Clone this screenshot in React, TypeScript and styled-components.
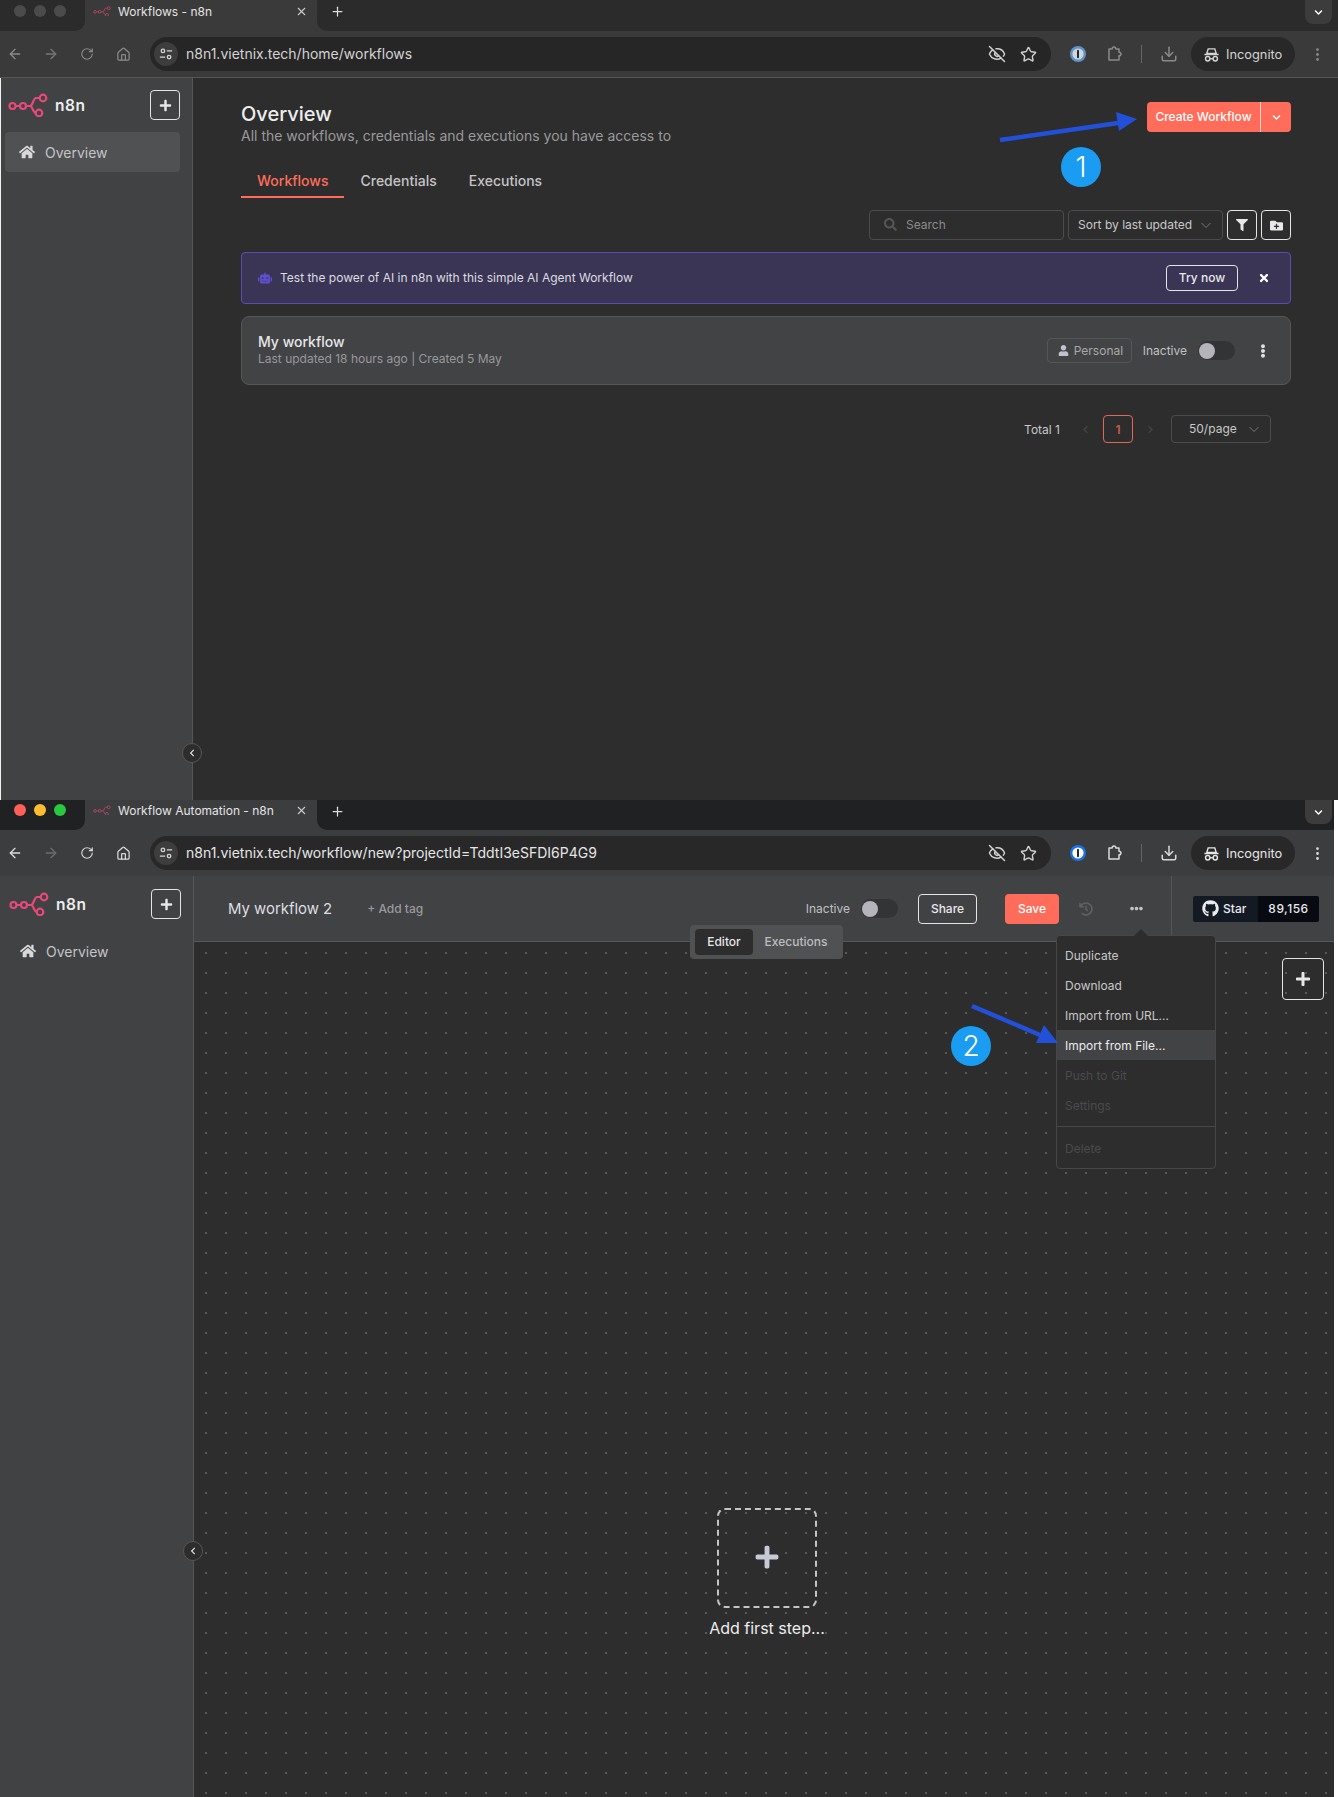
import { FC, ReactNode } from 'react';
import styled, { createGlobalStyle } from 'styled-components';
import { ArrowLeft, ArrowRight, Download, EllipsisVertical, EyeOff, House, Plus, RotateCw, Star, X } from 'lucide-react';
import {
  FaChevronDown,
  FaChevronLeft,
  FaChevronRight,
  FaEllipsisH,
  FaEllipsisV,
  FaFilter,
  FaFolderPlus,
  FaGithub,
  FaHistory,
  FaHome,
  FaPlus,
  FaRobot,
  FaSearch,
  FaTimes,
  FaUser,
} from 'react-icons/fa';

const GlobalStyle = createGlobalStyle`
  html, body {
    margin: 0;
    padding: 0;
    background: #ffffff;
  }
  body {
    font-family: Inter, "Liberation Sans", sans-serif;
    -webkit-font-smoothing: antialiased;
  }
  * {
    box-sizing: border-box;
  }
`;

const Page = styled.div`
  width: 1338px;
  height: 1797px;
  overflow: hidden;
`;

const Window = styled.section<{ $focused?: boolean }>`
  --strip: ${(p) => (p.$focused ? '#202122' : '#2b2b2b')};
  --strip-height: ${(p) => (p.$focused ? '30px' : '31px')};
  --tab-lift: ${(p) => (p.$focused ? '10px' : '9px')};
  --chrome: ${(p) => (p.$focused ? '#3c3d3f' : '#3a3a3a')};
  --pill: ${(p) => (p.$focused ? '#282829' : '#262626')};
  --ink: ${(p) => (p.$focused ? '#d8d9db' : '#8a8a8a')};
  --ink-soft: ${(p) => (p.$focused ? '#6c6d70' : '#777777')};
  --url: ${(p) => (p.$focused ? '#e6e6e6' : '#d4d4d4')};
  position: relative;
  display: flex;
  flex-direction: column;
  width: ${(p) => (p.$focused ? '1334px' : '1338px')};
  height: ${(p) => (p.$focused ? '997px' : '800px')};
  background: #2d2d2d;
`;

const TabStrip = styled.div`
  display: flex;
  flex: none;
  height: var(--strip-height);
  background: var(--chrome);
`;

const LightsArea = styled.div`
  display: flex;
  align-items: center;
  gap: 8px;
  width: 85px;
  padding: 0 0 var(--tab-lift) 14px;
  background: var(--strip);
  border-bottom-right-radius: 10px;
`;

const Light = styled.span<{ $color: string }>`
  width: 12px;
  height: 12px;
  border-radius: 50%;
  background: ${(p) => p.$color};
`;

const Tab = styled.div`
  display: flex;
  align-items: center;
  width: 232px;
  padding: 0 9px var(--tab-lift) 8px;
  font-size: 12px;
  color: #e4e4e4;
`;

const TabTitle = styled.span`
  flex: 1;
  margin-left: 7px;
  white-space: nowrap;
`;

const StripRest = styled.div<{ $inset: number }>`
  flex: 1;
  display: flex;
  align-items: flex-start;
  padding-right: ${(p) => p.$inset}px;
  background: var(--strip);
  border-bottom-left-radius: 10px;
  color: #dcdcdc;
`;

const NewTab = styled.span`
  display: flex;
  margin: 4px 0 0 13px;
`;

const TabListButton = styled.span`
  display: flex;
  align-items: center;
  justify-content: center;
  width: 27px;
  height: 24px;
  margin-left: auto;
  border-radius: 0 0 8px 8px;
  background: #3c3c3c;
  color: #ffffff;
`;

const Toolbar = styled.div<{ $rule?: boolean }>`
  display: flex;
  flex: none;
  align-items: center;
  height: ${(p) => (p.$rule ? '47px' : '46px')};
  background: var(--chrome);
  border-bottom: ${(p) => (p.$rule ? '1px solid #555555' : 'none')};
  color: var(--ink);
`;

const NavGroup = styled.div`
  display: flex;
  gap: 6px;
`;

const NavButton = styled.span<{ $off?: boolean }>`
  display: flex;
  align-items: center;
  justify-content: center;
  width: 30px;
  color: ${(p) => (p.$off ? 'var(--ink-soft)' : 'var(--ink)')};
`;

const UrlPill = styled.div`
  display: flex;
  align-items: center;
  width: 901px;
  height: 34px;
  margin-left: 12px;
  padding: 0 14px 0 4px;
  border-radius: 17px;
  background: var(--pill);
`;

const TuneBadge = styled.span`
  display: flex;
  align-items: center;
  justify-content: center;
  width: 24px;
  height: 24px;
  border-radius: 50%;
  background: #3d3d3d;
  color: #d6d6d6;
`;

const UrlText = styled.span`
  flex: 1;
  margin-left: 8px;
  padding-bottom: 1px;
  font-size: 14px;
  color: var(--url);
  white-space: nowrap;
`;

const UrlAction = styled.span`
  display: flex;
  margin-left: 14px;
  color: #d0d0d0;
`;

const ToolSlot = styled.span<{ $gap: number }>`
  display: flex;
  align-items: center;
  justify-content: center;
  width: 28px;
  margin-left: ${(p) => p.$gap}px;
`;

const ToolRule = styled.span`
  width: 1px;
  height: 18px;
  margin-left: 13px;
  background: #666666;
`;

const IncognitoPill = styled.div`
  display: flex;
  align-items: center;
  gap: 6px;
  width: 104px;
  height: 34px;
  margin-left: 8px;
  padding-left: 12px;
  border-radius: 17px;
  background: #282829;
  font-size: 12.8px;
  color: var(--url);
`;

const Body = styled.div`
  flex: 1;
  display: flex;
  min-height: 0;
`;

const Sidebar = styled.aside<{ $framed?: boolean }>`
  position: relative;
  flex: none;
  width: ${(p) => (p.$framed ? '193px' : '194px')};
  padding: ${(p) => (p.$framed ? '12px' : '13px')} 12px 0 ${(p) => (p.$framed ? '7px' : '9px')};
  background: #414244;
  border-left: ${(p) => (p.$framed ? '1px solid #f0f0f0' : 'none')};
  border-right: 1px solid #555658;
`;

const BrandRow = styled.div`
  display: flex;
  align-items: center;
  height: 30px;
`;

const BrandName = styled.span`
  flex: 1;
  margin-left: 7px;
  font-size: 15.5px;
  font-weight: 600;
  letter-spacing: 0.6px;
  color: #ededed;
`;

const OutlineButton = styled.button<{ $size: number }>`
  display: flex;
  align-items: center;
  justify-content: center;
  flex: none;
  width: ${(p) => p.$size}px;
  height: ${(p) => p.$size}px;
  padding: 0;
  border: 1px solid #e4e4e4;
  border-radius: 4px;
  background: transparent;
  color: #e8e8ea;
`;

const NavItem = styled.div<{ $active?: boolean }>`
  display: flex;
  align-items: center;
  gap: 10px;
  height: 40px;
  margin: 12px 0 0 -3px;
  padding-left: 14px;
  border-radius: 4px;
  background: ${(p) => (p.$active ? '#505153' : 'transparent')};
  font-size: 14px;
  color: #c4c4c6;
`;

const CollapseButton = styled.span`
  position: absolute;
  top: 665px;
  right: -10px;
  z-index: 2;
  display: flex;
  align-items: center;
  justify-content: center;
  width: 20px;
  height: 20px;
  border: 1px solid #555658;
  border-radius: 50%;
  background: #2d2d2d;
  color: #e0e0e0;
`;

const OverviewMain = styled.main`
  flex: 1;
  padding: 24px 47px 0 48px;
`;

const OverviewHeader = styled.header`
  display: flex;
  justify-content: space-between;
  align-items: flex-start;
`;

const PageTitle = styled.h1`
  margin: 0;
  font-size: 20px;
  line-height: 25px;
  font-weight: 500;
  color: #eeeeee;
`;

const PageSubtitle = styled.p`
  margin: 0;
  font-size: 14px;
  line-height: 18px;
  color: #9a9a9c;
`;

const SplitButton = styled.div`
  display: flex;
  flex: none;
  width: 144px;
  height: 30px;
  border-radius: 4px;
  background: #ff6d5a;
  font-size: 12px;
  font-weight: 500;
  color: #ffffff;
`;

const SplitLabel = styled.span`
  display: flex;
  align-items: center;
  justify-content: center;
  width: 114px;
  padding-bottom: 1px;
  border-right: 1px solid #ffd5ce;
`;

const SplitCaret = styled.span`
  flex: 1;
  display: flex;
  align-items: center;
  justify-content: center;
`;

const TabsRow = styled.nav`
  display: flex;
  margin-top: 21px;
`;

const PageTab = styled.span<{ $active?: boolean }>`
  height: 32px;
  padding: 5px 16px 0;
  border-bottom: 2px solid ${(p) => (p.$active ? '#ff6d5a' : 'transparent')};
  font-size: 14px;
  line-height: 20px;
  font-weight: 500;
  color: ${(p) => (p.$active ? '#ff6d5a' : '#c4c4c6')};
`;

const FilterRow = styled.div`
  display: flex;
  justify-content: flex-end;
  gap: 4px;
  margin-top: 12px;
`;

const SearchField = styled.div`
  display: flex;
  align-items: center;
  gap: 9px;
  width: 195px;
  height: 30px;
  padding: 0 0 1px 14px;
  border: 1px solid #4c4c4e;
  border-radius: 4px;
  font-size: 12px;
  color: #8b8b8d;
`;

const SelectBox = styled.div<{ $width: number; $height: number; $pad: number }>`
  display: flex;
  align-items: center;
  justify-content: space-between;
  width: ${(p) => p.$width}px;
  height: ${(p) => p.$height}px;
  padding: 0 10px 1px ${(p) => p.$pad}px;
  border: 1px solid #4c4c4e;
  border-radius: 4px;
  font-size: 12px;
  color: #c8c8ca;
`;

const SelectCaret = styled.span`
  display: flex;
  color: #77777a;
`;

const Banner = styled.div`
  display: flex;
  align-items: center;
  height: 52px;
  margin-top: 12px;
  padding: 0 20px 0 16px;
  border: 1px solid #5a4cb0;
  border-radius: 4px;
  background: #3a3555;
  font-size: 12px;
  color: #dcdce0;
`;

const BannerIcon = styled.span`
  display: flex;
  color: #5d4fd0;
`;

const BannerText = styled.span`
  flex: 1;
  margin-left: 8px;
  padding-bottom: 1px;
`;

const TextButton = styled.span<{ $width: number; $height: number }>`
  display: flex;
  align-items: center;
  justify-content: center;
  flex: none;
  width: ${(p) => p.$width}px;
  height: ${(p) => p.$height}px;
  padding-bottom: 1px;
  border: 1px solid #e4e4e4;
  border-radius: 4px;
  font-size: 12px;
  font-weight: 500;
  color: #e8e8ea;
`;

const BannerClose = styled.span`
  display: flex;
  margin-left: 20px;
  color: #ffffff;
`;

const WorkflowCard = styled.article`
  display: flex;
  align-items: center;
  height: 69px;
  margin-top: 12px;
  padding: 0 17px 0 16px;
  border: 1px solid #555658;
  border-radius: 8px;
  background: #424345;
`;

const CardInfo = styled.div`
  flex: 1;
  padding-bottom: 1px;
`;

const CardTitle = styled.h3`
  margin: 0;
  font-size: 14px;
  line-height: 18px;
  font-weight: 500;
  color: #e6e6e8;
`;

const CardMeta = styled.p`
  margin: 0;
  font-size: 12px;
  line-height: 16px;
  color: #98989a;
`;

const ProjectTag = styled.span`
  display: flex;
  align-items: center;
  gap: 5px;
  width: 85px;
  height: 25px;
  padding-left: 10px;
  border: 1px solid #555658;
  border-radius: 4px;
  font-size: 12px;
  color: #a8a8aa;
`;

const TagIcon = styled.span`
  display: flex;
  color: #c0c2cc;
`;

const StatusLabel = styled.span<{ $gap: number }>`
  margin-left: ${(p) => p.$gap}px;
  font-size: 12px;
  color: #c0c0c2;
`;

const Toggle = styled.span`
  display: flex;
  align-items: center;
  flex: none;
  width: 37px;
  height: 19px;
  margin-left: 11px;
  padding-left: 1px;
  border-radius: 10px;
  background: #333436;
`;

const ToggleKnob = styled.span`
  width: 16px;
  height: 16px;
  border-radius: 50%;
  background: #b4b4ba;
`;

const KebabSlot = styled.span`
  display: flex;
  justify-content: center;
  width: 20px;
  margin-left: 18px;
  color: #e0e0e2;
`;

const PagerRow = styled.div`
  display: flex;
  justify-content: flex-end;
  align-items: center;
  height: 28px;
  margin-top: 30px;
  padding-right: 20px;
  font-size: 12px;
  color: #c8c8ca;
`;

const PagerArrow = styled.span<{ $gap: number }>`
  display: flex;
  justify-content: center;
  width: 16px;
  margin-left: ${(p) => p.$gap}px;
  color: #444446;
`;

const PagerCurrent = styled.span`
  display: flex;
  align-items: center;
  justify-content: center;
  width: 30px;
  height: 28px;
  margin-left: 10px;
  border: 1px solid #e0675a;
  border-radius: 4px;
  font-weight: 600;
  color: #c9594b;
`;

const PagerSelect = styled.div`
  margin-left: 13px;
`;

const EditorMain = styled.main`
  flex: 1;
  display: flex;
  flex-direction: column;
  min-width: 0;
`;

const EditorHeader = styled.header`
  display: flex;
  flex: none;
  align-items: center;
  height: 66px;
  padding: 0 15px 0 34px;
  background: #414244;
  border-bottom: 1px solid #565759;
`;

const WorkflowName = styled.span`
  font-size: 14.9px;
  color: #dedee0;
`;

const AddTag = styled.span`
  margin-left: 35px;
  font-size: 12px;
  font-weight: 500;
  color: #9a9a9c;
`;

const HeaderEnd = styled.div`
  display: flex;
  align-items: center;
  align-self: stretch;
  margin-left: auto;
`;

const ShareSlot = styled.div`
  margin-left: 20px;
`;

const SaveButton = styled.span`
  display: flex;
  align-items: center;
  justify-content: center;
  width: 54px;
  height: 30px;
  margin-left: 28px;
  border-radius: 4px;
  background: #ff6d5a;
  font-size: 12px;
  font-weight: 500;
  color: #ffffff;
`;

const HeaderIcon = styled.span<{ $gap: number; $color: string }>`
  display: flex;
  justify-content: center;
  width: 20px;
  margin-left: ${(p) => p.$gap}px;
  color: ${(p) => p.$color};
`;

const HeaderRule = styled.span`
  align-self: stretch;
  width: 1px;
  margin-left: 25px;
  background: #555658;
`;

const GithubBadge = styled.div`
  display: flex;
  width: 126px;
  height: 26px;
  margin-left: 21px;
  font-size: 12px;
  font-weight: 500;
  color: #e8eaee;
`;

const GithubStar = styled.span`
  display: flex;
  align-items: center;
  gap: 4px;
  width: 65px;
  padding-left: 9px;
  background: #141a24;
  border-radius: 2px 0 0 2px;
`;

const GithubCount = styled.span`
  flex: 1;
  display: flex;
  align-items: center;
  justify-content: center;
  background: #070a10;
  border-radius: 0 2px 2px 0;
  letter-spacing: 0.5px;
`;

const Canvas = styled.div`
  position: relative;
  flex: 1;
  background-color: #2d2d2d;
  background-image: radial-gradient(ellipse 0.8px 1.3px at center, #6e6e70 60%, transparent 100%);
  background-size: 20px 20px;
  background-position: 2px 1px;
`;

const ViewSwitch = styled.div`
  position: absolute;
  top: -17px;
  left: 496px;
  z-index: 2;
  display: flex;
  align-items: center;
  width: 153px;
  height: 34px;
  padding: 0 4px 0 5px;
  border-radius: 4px;
  background: #505153;
  font-size: 12px;
  font-weight: 500;
`;

const ViewOption = styled.span<{ $active?: boolean }>`
  display: flex;
  align-items: center;
  justify-content: center;
  flex: ${(p) => (p.$active ? '0 0 58px' : '1')};
  height: 26px;
  padding-bottom: 2px;
  border-radius: 4px;
  background: ${(p) => (p.$active ? '#2d2d2d' : 'transparent')};
  color: ${(p) => (p.$active ? '#e6e6e8' : '#bdbdbf')};
`;

const Menu = styled.div`
  position: absolute;
  top: -7px;
  left: 862px;
  z-index: 3;
  width: 160px;
  height: 234px;
  padding-top: 4px;
  border: 1px solid #47474a;
  border-radius: 4px;
  background: #2d2d2d;

  &::before {
    content: '';
    position: absolute;
    top: -7px;
    left: 77px;
    border-left: 7px solid transparent;
    border-right: 7px solid transparent;
    border-bottom: 7px solid #2d2d2d;
  }
`;

const MenuItem = styled.div<{ $disabled?: boolean; $hover?: boolean }>`
  display: flex;
  align-items: center;
  height: 30px;
  padding-left: 8px;
  font-size: 12px;
  background: ${(p) => (p.$hover ? '#424345' : 'transparent')};
  color: ${(p) => (p.$disabled ? '#4a4a4c' : p.$hover ? '#ececee' : '#c8c8ca')};
`;

const MenuRule = styled.hr`
  height: 1px;
  margin: 6px 0;
  border: 0;
  background: #47474a;
`;

const CanvasPlus = styled.div`
  position: absolute;
  top: 16px;
  right: 10px;
`;

const StepNode = styled.div`
  position: absolute;
  top: 566px;
  left: 503px;
  display: flex;
  flex-direction: column;
  align-items: center;
  width: 140px;
`;

const StepBox = styled.div`
  display: flex;
  align-items: center;
  justify-content: center;
  width: 100px;
  height: 100px;
  padding-bottom: 2px;
  border: 2px dashed #c4c4c6;
  border-radius: 8px;
  color: #c6cad6;
`;

const StepLabel = styled.span`
  margin-top: 10px;
  font-size: 16px;
  line-height: 20px;
  color: #ececee;
`;

const ArrowLayer = styled.svg`
  position: absolute;
  top: 0;
  left: 0;
  z-index: 4;
  width: 100%;
  height: 100%;
  pointer-events: none;
`;

const StepBadge = styled.span<{ $x: number; $y: number }>`
  position: absolute;
  top: ${(p) => p.$y}px;
  left: ${(p) => p.$x}px;
  z-index: 5;
  display: flex;
  align-items: center;
  justify-content: center;
  width: 40px;
  height: 40px;
  border-radius: 50%;
  background: #1a9cf2;
  font-size: 28px;
  font-weight: 300;
  color: #ffffff;
`;

const N8nLogo: FC<{ width: number; color: string }> = ({ width, color }) => (
  <svg width={width} height={(width * 24) / 40} viewBox="0 0 40 24" fill="none" stroke={color} strokeWidth="2.2">
    <circle cx="4.5" cy="13" r="3" />
    <circle cx="15" cy="13" r="3" />
    <path d="M7.5 13h4.5M18 13h4c3 0 3-8 6-8h3.5" />
    <path d="M22 13c3 0 2 6 6 7" />
    <circle cx="35" cy="5" r="3.3" />
    <circle cx="31" cy="20" r="3.3" />
  </svg>
);

const TuneIcon: FC = () => (
  <svg width="14" height="14" viewBox="0 0 16 16" fill="none" stroke="currentColor" strokeWidth="1.5">
    <circle cx="4.5" cy="4.5" r="2" />
    <path d="M9 4.5h6M1 11.5h6" />
    <circle cx="11.5" cy="11.5" r="2" />
  </svg>
);

const HatIcon: FC = () => (
  <svg width="17" height="17" viewBox="0 0 18 18" fill="none" stroke="currentColor" strokeWidth="1.5">
    <path d="M5.5 3h7l1.5 5H4zM1.5 9h15" />
    <circle cx="5" cy="13.5" r="2.3" />
    <circle cx="13" cy="13.5" r="2.3" />
    <path d="M7.3 13.5h3.4" />
  </svg>
);

const ExtensionIcon: FC = () => (
  <svg width="18" height="18" viewBox="0 0 18 18" fill="none" stroke="currentColor" strokeWidth="1.5" strokeLinejoin="round">
    <path d="M4 4h3.2c0-2.6 3.6-2.6 3.6 0H14v3.2c2.6 0 2.6 3.6 0 3.6V15H4z" />
  </svg>
);

const OnePasswordIcon: FC<{ dim?: boolean }> = ({ dim }) => (
  <svg width="18" height="18" viewBox="0 0 18 18">
    <circle cx="9" cy="9" r="8" fill={dim ? '#5f93c8' : '#1a73e8'} />
    <circle cx="9" cy="9" r="5.6" fill={dim ? '#cfd6dd' : '#ffffff'} />
    <rect x="8" y="4.8" width="2" height="8.4" rx="1" fill="#26282c" />
  </svg>
);

const ChromeFrame: FC<{ title: string; url: string; focused?: boolean; inset: number; rule?: boolean }> = ({
  title,
  url,
  focused,
  inset,
  rule,
}) => (
  <>
    <TabStrip>
      <LightsArea>
        <Light $color={focused ? '#ff5f57' : '#4b4b4b'} />
        <Light $color={focused ? '#febc2e' : '#4b4b4b'} />
        <Light $color={focused ? '#28c840' : '#4b4b4b'} />
      </LightsArea>
      <Tab>
        <N8nLogo width={18} color="#a8455f" />
        <TabTitle>{title}</TabTitle>
        <X size={13} color="#cccccc" />
      </Tab>
      <StripRest $inset={inset}>
        <NewTab>
          <Plus size={15} />
        </NewTab>
        <TabListButton>
          <FaChevronDown size={9} />
        </TabListButton>
      </StripRest>
    </TabStrip>
    <Toolbar $rule={rule}>
      <NavGroup>
        <NavButton>
          <ArrowLeft size={16} />
        </NavButton>
        <NavButton $off>
          <ArrowRight size={16} />
        </NavButton>
        <NavButton>
          <RotateCw size={14} />
        </NavButton>
        <NavButton>
          <House size={15} />
        </NavButton>
      </NavGroup>
      <UrlPill>
        <TuneBadge>
          <TuneIcon />
        </TuneBadge>
        <UrlText>{url}</UrlText>
        <UrlAction>
          <EyeOff size={18} />
        </UrlAction>
        <UrlAction>
          <Star size={17} />
        </UrlAction>
      </UrlPill>
      <ToolSlot $gap={13}>
        <OnePasswordIcon dim={!focused} />
      </ToolSlot>
      <ToolSlot $gap={8}>
        <ExtensionIcon />
      </ToolSlot>
      <ToolRule />
      <ToolSlot $gap={13}>
        <Download size={18} />
      </ToolSlot>
      <IncognitoPill>
        <HatIcon />
        Incognito
      </IncognitoPill>
      <ToolSlot $gap={8}>
        <EllipsisVertical size={17} />
      </ToolSlot>
    </Toolbar>
  </>
);

const SideNav: FC<{ framed?: boolean; active?: boolean }> = ({ framed, active }) => (
  <Sidebar $framed={framed}>
    <BrandRow>
      <N8nLogo width={40} color="#e8487a" />
      <BrandName>n8n</BrandName>
      <OutlineButton $size={30}>
        <FaPlus size={13} />
      </OutlineButton>
    </BrandRow>
    <NavItem $active={active}>
      <FaHome size={16} color="#d8d8da" />
      Overview
    </NavItem>
    <CollapseButton>
      <FaChevronLeft size={8} />
    </CollapseButton>
  </Sidebar>
);

const Switch: FC = () => (
  <Toggle>
    <ToggleKnob />
  </Toggle>
);

const Select: FC<{ width: number; height: number; pad: number; children: ReactNode }> = ({
  width,
  height,
  pad,
  children,
}) => (
  <SelectBox $width={width} $height={height} $pad={pad}>
    {children}
    <SelectCaret>
      <svg width="12" height="12" viewBox="0 0 12 12" fill="none" stroke="currentColor" strokeWidth="1">
        <path d="M1.5 4l4.5 4.5L10.5 4" />
      </svg>
    </SelectCaret>
  </SelectBox>
);

const OverviewWindow: FC = () => (
  <Window>
    <ChromeFrame title="Workflows - n8n" url="n8n1.vietnix.tech/home/workflows" inset={6} rule />
    <Body>
      <SideNav framed active />
      <OverviewMain>
        <OverviewHeader>
          <div>
            <PageTitle>Overview</PageTitle>
            <PageSubtitle>All the workflows, credentials and executions you have access to</PageSubtitle>
          </div>
          <SplitButton>
            <SplitLabel>Create Workflow</SplitLabel>
            <SplitCaret>
              <FaChevronDown size={9} />
            </SplitCaret>
          </SplitButton>
        </OverviewHeader>
        <TabsRow>
          <PageTab $active>Workflows</PageTab>
          <PageTab>Credentials</PageTab>
          <PageTab>Executions</PageTab>
        </TabsRow>
        <FilterRow>
          <SearchField>
            <FaSearch size={13} color="#555557" />
            Search
          </SearchField>
          <Select width={155} height={30} pad={9}>
            Sort by last updated
          </Select>
          <OutlineButton $size={30}>
            <FaFilter size={12} />
          </OutlineButton>
          <OutlineButton $size={30}>
            <FaFolderPlus size={13} />
          </OutlineButton>
        </FilterRow>
        <Banner>
          <BannerIcon>
            <FaRobot size={14} />
          </BannerIcon>
          <BannerText>Test the power of AI in n8n with this simple AI Agent Workflow</BannerText>
          <TextButton $width={72} $height={26}>
            Try now
          </TextButton>
          <BannerClose>
            <FaTimes size={12} />
          </BannerClose>
        </Banner>
        <WorkflowCard>
          <CardInfo>
            <CardTitle>My workflow</CardTitle>
            <CardMeta>Last updated 18 hours ago | Created 5 May</CardMeta>
          </CardInfo>
          <ProjectTag>
            <TagIcon>
              <FaUser size={11} />
            </TagIcon>
            Personal
          </ProjectTag>
          <StatusLabel $gap={11}>Inactive</StatusLabel>
          <Switch />
          <KebabSlot>
            <FaEllipsisV size={14} />
          </KebabSlot>
        </WorkflowCard>
        <PagerRow>
          <span>Total 1</span>
          <PagerArrow $gap={17}>
            <FaChevronLeft size={9} />
          </PagerArrow>
          <PagerCurrent>1</PagerCurrent>
          <PagerArrow $gap={9}>
            <FaChevronRight size={9} />
          </PagerArrow>
          <PagerSelect>
            <Select width={100} height={28} pad={17}>
              50/page
            </Select>
          </PagerSelect>
        </PagerRow>
      </OverviewMain>
    </Body>
    <ArrowLayer viewBox="0 0 1338 800">
      <path d="M1000 140L1118 123" stroke="#2350d8" strokeWidth="4.5" />
      <path d="M1137 119L1116 112L1119 131Z" fill="#2350d8" />
    </ArrowLayer>
    <StepBadge $x={1061} $y={147}>
      1
    </StepBadge>
  </Window>
);

const EditorWindow: FC = () => (
  <Window $focused>
    <ChromeFrame
      title="Workflow Automation - n8n"
      url="n8n1.vietnix.tech/workflow/new?projectId=TddtI3eSFDI6P4G9"
      inset={2}
      focused
    />
    <Body>
      <SideNav />
      <EditorMain>
        <EditorHeader>
          <WorkflowName>My workflow 2</WorkflowName>
          <AddTag>+ Add tag</AddTag>
          <HeaderEnd>
            <StatusLabel $gap={0}>Inactive</StatusLabel>
            <Switch />
            <ShareSlot>
              <TextButton $width={59} $height={30}>
                Share
              </TextButton>
            </ShareSlot>
            <SaveButton>Save</SaveButton>
            <HeaderIcon $gap={17} $color="#5f5f61">
              <FaHistory size={14} />
            </HeaderIcon>
            <HeaderIcon $gap={30} $color="#c4c4c6">
              <FaEllipsisH size={13} />
            </HeaderIcon>
            <HeaderRule />
            <GithubBadge>
              <GithubStar>
                <FaGithub size={17} />
                Star
              </GithubStar>
              <GithubCount>89,156</GithubCount>
            </GithubBadge>
          </HeaderEnd>
        </EditorHeader>
        <Canvas>
          <ViewSwitch>
            <ViewOption $active>Editor</ViewOption>
            <ViewOption>Executions</ViewOption>
          </ViewSwitch>
          <Menu>
            <MenuItem>Duplicate</MenuItem>
            <MenuItem>Download</MenuItem>
            <MenuItem>Import from URL...</MenuItem>
            <MenuItem $hover>Import from File...</MenuItem>
            <MenuItem $disabled>Push to Git</MenuItem>
            <MenuItem $disabled>Settings</MenuItem>
            <MenuRule />
            <MenuItem $disabled>Delete</MenuItem>
          </Menu>
          <CanvasPlus>
            <OutlineButton $size={42}>
              <FaPlus size={16} />
            </OutlineButton>
          </CanvasPlus>
          <StepNode>
            <StepBox>
              <FaPlus size={26} />
            </StepBox>
            <StepLabel>Add first step...</StepLabel>
          </StepNode>
        </Canvas>
      </EditorMain>
    </Body>
    <ArrowLayer viewBox="0 0 1334 997">
      <path d="M972 206L1040 235" stroke="#2350d8" strokeWidth="4.5" />
      <path d="M1058 243L1044 225L1036 243Z" fill="#2350d8" />
    </ArrowLayer>
    <StepBadge $x={951} $y={226}>
      2
    </StepBadge>
  </Window>
);

const App: FC = () => (
  <Page>
    <GlobalStyle />
    <OverviewWindow />
    <EditorWindow />
  </Page>
);

export default App;
